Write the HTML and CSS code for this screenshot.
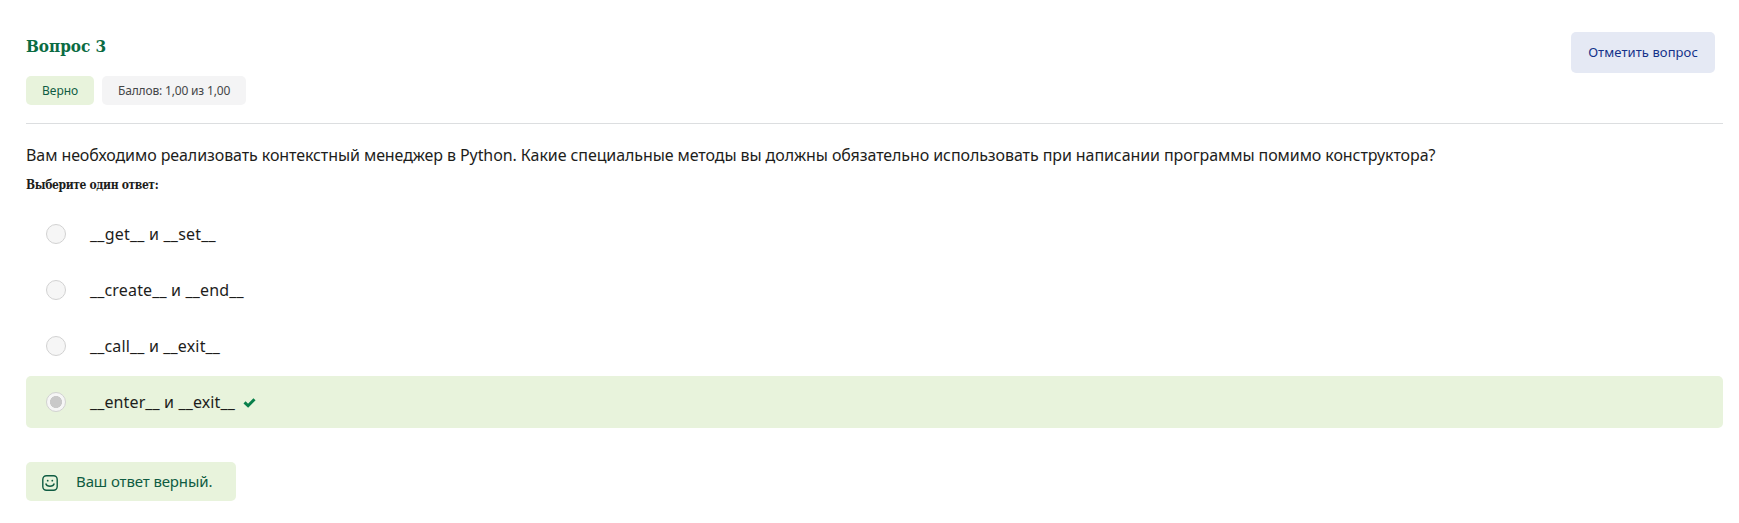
FILE: index.html
```html
<!DOCTYPE html>
<html lang="ru">
<head>
<meta charset="utf-8">
<title>Вопрос 3</title>
<link rel="stylesheet" href="styles.css">
</head>
<body>
<main class="question">
  <header class="info">
    <div>
      <h3 class="title">Вопрос 3</h3>
      <div class="badges">
        <span class="badge badge-correct">Верно</span>
        <span class="badge badge-grade">Баллов: 1,00 из 1,00</span>
      </div>
    </div>
    <button class="flag" type="button">Отметить вопрос</button>
  </header>
  <p class="text">Вам необходимо реализовать контекстный менеджер в Python. Какие специальные методы вы должны обязательно использовать при написании программы помимо конструктора?</p>
  <h4 class="prompt">Выберите один ответ:</h4>
  <div class="answers">
    <label class="answer"><i class="radio"></i><span class="label-wide">__get__ и __set__</span></label>
    <label class="answer"><i class="radio"></i><span>__create__ и __end__</span></label>
    <label class="answer"><i class="radio"></i><span>__call__ и __exit__</span></label>
    <label class="answer correct"><i class="radio checked"></i><span class="label-tight">__enter__ и __exit__</span>
      <svg class="check" viewBox="0 0 12 10"><path d="M1.4 4.9 4.7 8 10.6 2" /></svg>
    </label>
  </div>
  <div class="feedback">
    <svg class="smile" viewBox="0 0 16 16"><rect x=".8" y=".8" width="14.4" height="14.4" rx="3.6"/><path d="M3.7 8.5C5 12.2 11 12.2 12.3 8.5"/><circle cx="5.7" cy="5.7" r=".9"/><circle cx="10.3" cy="5.7" r=".9"/></svg>
    <span>Ваш ответ верный.</span>
  </div>
</main>
</body>
</html>
```
FILE: styles.css
```css
* { box-sizing: border-box; }
body {
  margin: 0;
  background: #fff;
  color: #1d1d1b;
  font-family: "Noto Sans", sans-serif;
}
.question { padding: 32px 16px 0 26px; }
.info {
  display: flex;
  justify-content: space-between;
  align-items: flex-start;
  height: 92px;
  padding-right: 8px;
  border-bottom: 1px solid #dcdee0;
}
.title, .prompt {
  margin: 0;
  font-family: "DejaVu Serif Condensed", "DejaVu Serif", serif;
  font-stretch: condensed;
  font-weight: 700;
  white-space: nowrap;
}
.title { height: 44px; font-size: 17px; line-height: 29px; letter-spacing: -.05px; color: #0b6b43; }
.badges { display: flex; gap: 8px; }
.badge {
  height: 29px;
  border-radius: 5px;
  padding-left: 16px;
  font-size: 12px;
  line-height: 30px;
  white-space: nowrap;
}
.badge-correct { width: 68px; background: #e8f3dc; color: #0f5c42; }
.badge-grade { width: 144px; background: #f4f4f5; color: #454648; letter-spacing: -.17px; }
.flag {
  width: 144px;
  height: 41px;
  border: 0;
  border-radius: 5px;
  padding: 0 0 1px;
  background: #e5e9f4;
  color: #14328a;
  font: 13px "Noto Sans", sans-serif;
  letter-spacing: .08px;
  white-space: nowrap;
}
.text { margin: 16px 0 0; height: 31px; font-size: 16px; line-height: 30px; letter-spacing: -.085px; white-space: nowrap; }
.prompt { height: 37px; font-size: 12px; line-height: 28px; letter-spacing: -.38px; }
.answers { display: grid; gap: 4px; }
.answer {
  display: flex;
  align-items: center;
  height: 52px;
  padding-left: 20px;
  border-radius: 5px;
  font-size: 16px;
  letter-spacing: .16px;
  white-space: nowrap;
}
.answer span { padding-bottom: 1px; }
.label-wide { letter-spacing: .22px; }
.label-tight { letter-spacing: .12px; }
.correct { background: #e8f3dc; }
.radio {
  width: 20px;
  height: 20px;
  margin-right: 24px;
  border: 1px solid #d2d2d2;
  border-radius: 50%;
  background: #f6f6f6;
}
.checked { background: radial-gradient(circle, #c9c9c9 5.7px, #f6f6f6 6.3px); }
.check { width: 13px; height: 11px; margin-left: 8px; fill: none; stroke: #087f4b; stroke-width: 2.8; }
.feedback {
  display: flex;
  align-items: center;
  width: 210px;
  height: 39px;
  margin-top: 34px;
  padding-left: 16px;
  border-radius: 5px;
  background: #e8f3dc;
  color: #0f5c42;
  font-size: 15px;
  letter-spacing: -.12px;
  white-space: nowrap;
}
.feedback span { padding-bottom: 1px; }
.smile { width: 16px; height: 16px; margin: 3px 18px 0 0; fill: none; stroke: #0f5c42; stroke-width: 1.4; }
.smile circle { fill: #0f5c42; stroke: none; }
```
